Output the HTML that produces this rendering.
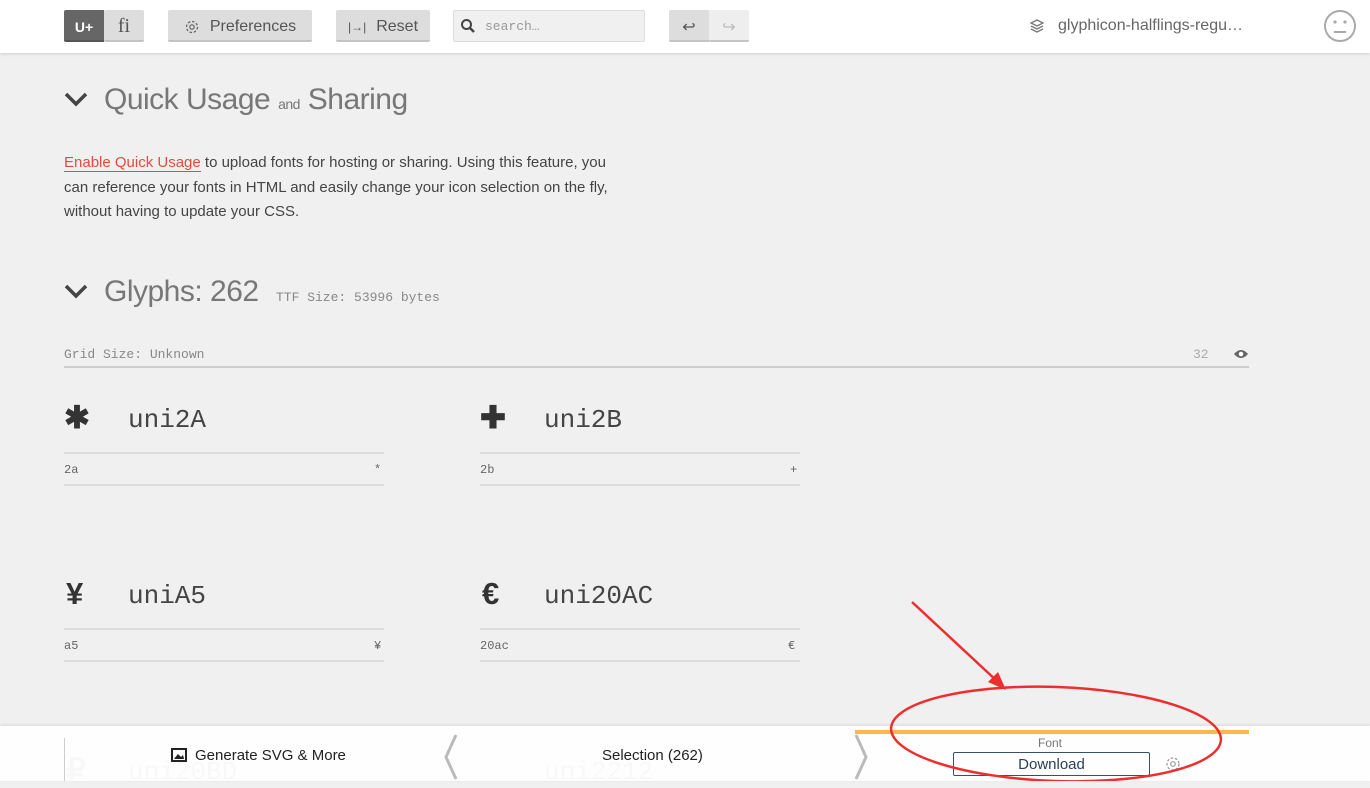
<!DOCTYPE html>
<html><head><meta charset="utf-8"><style>
*{margin:0;padding:0;box-sizing:border-box}
body{width:1370px;height:781px;overflow:hidden;background:#f0f0f0;font-family:"Liberation Sans",sans-serif;position:relative;color:#555}
.a{position:absolute}
.top{left:0;top:0;width:1370px;height:53px;background:#fff;box-shadow:0 1px 3px rgba(0,0,0,.15)}
.btn{position:absolute;top:10px;height:32px;padding-top:3px;background:#ddd;border-bottom:2px solid #c4c4c4;border-radius:2px;font-size:16px;color:#555;display:flex;align-items:center;justify-content:center}
.mono{font-family:"Liberation Mono",monospace}
.hr{position:absolute;height:2px;background:#dcdcdc}
.gname{position:absolute;font-family:"Liberation Mono",monospace;font-size:26px;color:#444}
.small{position:absolute;font-family:"Liberation Mono",monospace;font-size:12px;color:#666}
.icon{position:absolute;font-size:31px;font-weight:bold;color:#333}
</style></head><body>
<div class="a top"></div>
<div class="btn" style="left:64px;width:40px;background:#666;color:#fff;font-weight:bold;font-size:14px;border-bottom-color:#555;border-radius:2px 0 0 2px">U+</div>
<div class="btn" style="left:104px;width:40px;font-family:'Liberation Serif',serif;font-size:20px">fi</div>
<div class="btn" style="left:168px;width:144px"><svg width="16" height="16" viewBox="0 0 16 16" style="margin-right:10px"><circle cx="8" cy="8" r="5.5" fill="none" stroke="#666" stroke-width="1.3" stroke-dasharray="2.5 1.8"/><circle cx="8" cy="8" r="2.2" fill="none" stroke="#666" stroke-width="1.2"/></svg>Preferences</div>
<div class="btn" style="left:336px;width:94px"><span style="font-size:12px;margin-right:10px">|→|</span>Reset</div>
<div class="a" style="left:453px;top:10px;width:192px;height:32px;background:#f0f0f0;border:1px solid #ddd;border-radius:2px"></div>
<svg class="a" style="left:460px;top:18px" width="16" height="16"><circle cx="6.5" cy="6.5" r="4.5" fill="none" stroke="#444" stroke-width="2"/><line x1="10" y1="10" x2="14" y2="14" stroke="#444" stroke-width="2.5"/></svg>
<div class="a mono" style="left:485px;top:19px;font-size:13px;color:#999">search…</div>
<div class="btn" style="left:669px;width:40px;border-radius:2px 0 0 2px;color:#555">↩</div>
<div class="btn" style="left:709px;width:40px;background:#eee;color:#bbb">↪</div>
<svg class="a" style="left:1029px;top:18px" width="16" height="16"><path d="M8 2 L14 5 L8 8 L2 5Z M2 8 L8 11 L14 8 M2 11 L8 14 L14 11" fill="none" stroke="#777" stroke-width="1.3"/></svg>
<div class="a" style="left:1058px;top:17px;font-size:16px;color:#666">glyphicon-halflings-regu…</div>
<svg class="a" style="left:1323px;top:9px" width="34" height="34"><circle cx="17" cy="17" r="15" fill="none" stroke="#aaa" stroke-width="2"/><circle cx="12" cy="13" r="1.6" fill="#aaa"/><circle cx="22" cy="13" r="1.6" fill="#aaa"/><line x1="11" y1="23" x2="23" y2="23" stroke="#aaa" stroke-width="2"/></svg>

<svg class="a" style="left:64px;top:90px" width="24" height="20"><path d="M2 4 L12 14 L22 4" fill="none" stroke="#444" stroke-width="3.5"/></svg>
<div class="a" style="left:104px;top:83px;font-size:30px;color:#777;letter-spacing:-0.5px">Quick Usage <span style="font-size:14px">and</span> Sharing</div>
<div class="a" style="left:64px;top:151px;width:570px;font-size:15px;line-height:24.5px;color:#444"><span style="color:#e8493c;border-bottom:1.5px solid #e8493c">Enable Quick Usage</span> to upload fonts for hosting or sharing. Using this feature, you can reference your fonts in HTML and easily change your icon selection on the fly, without having to update your CSS.</div>

<svg class="a" style="left:64px;top:282px" width="24" height="20"><path d="M2 4 L12 14 L22 4" fill="none" stroke="#444" stroke-width="3.5"/></svg>
<div class="a" style="left:104px;top:275px;font-size:30px;color:#777;letter-spacing:-0.5px">Glyphs: 262</div>
<div class="a mono" style="left:276px;top:290px;font-size:13px;color:#888">TTF Size: 53996 bytes</div>
<div class="a mono" style="left:64px;top:347px;font-size:13px;color:#888">Grid Size: Unknown</div>
<div class="a mono" style="left:1193px;top:347px;font-size:13px;color:#aaa">32</div>
<svg class="a" style="left:1233px;top:348px" width="16" height="12"><path d="M1 6 Q8 -2 15 6 Q8 14 1 6Z" fill="#666"/><circle cx="8" cy="6" r="2.3" fill="#fff"/></svg>
<div class="hr" style="left:64px;top:366px;width:1185px;height:2px;background:#ccc"></div>

<div class="icon" style="left:64px;top:400px">✱</div><div class="gname" style="left:128px;top:405px">uni2A</div>
<div class="hr" style="left:64px;top:452px;width:320px"></div><div class="small" style="left:64px;top:463px">2a</div><div class="small" style="left:374px;top:463px">*</div><div class="hr" style="left:64px;top:484px;width:320px"></div>
<div class="icon" style="left:480px;top:400px">✚</div><div class="gname" style="left:544px;top:405px">uni2B</div>
<div class="hr" style="left:480px;top:452px;width:320px"></div><div class="small" style="left:480px;top:463px">2b</div><div class="small" style="left:790px;top:463px">+</div><div class="hr" style="left:480px;top:484px;width:320px"></div>

<div class="icon" style="left:66px;top:576px">¥</div><div class="gname" style="left:128px;top:581px">uniA5</div>
<div class="hr" style="left:64px;top:628px;width:320px"></div><div class="small" style="left:64px;top:639px">a5</div><div class="small" style="left:374px;top:639px">¥</div><div class="hr" style="left:64px;top:660px;width:320px"></div>
<div class="icon" style="left:482px;top:576px">€</div><div class="gname" style="left:544px;top:581px">uni20AC</div>
<div class="hr" style="left:480px;top:628px;width:320px"></div><div class="small" style="left:480px;top:639px">20ac</div><div class="small" style="left:788px;top:639px">€</div><div class="hr" style="left:480px;top:660px;width:320px"></div>

<div class="icon" style="left:66px;top:752px;color:#999">₽</div><div class="gname" style="left:128px;top:757px;color:#999">uni20BD</div>
<div class="gname" style="left:544px;top:757px;color:#999">uni2212</div>

<div class="a" style="left:0;top:726px;width:1370px;height:55px;background:rgba(255,255,255,.93);box-shadow:0 -1px 3px rgba(0,0,0,.1)"></div>
<div class="a" style="left:64px;top:738px;width:1px;height:43px;background:#ccc"></div>
<svg class="a" style="left:171px;top:748px" width="16" height="14"><rect x="1" y="1" width="14" height="12" fill="none" stroke="#222" stroke-width="2"/><path d="M3 11 L7 6 L10 9 L12 7 L13 11Z" fill="#222"/></svg>
<div class="a" style="left:195px;top:747px;font-size:15px;color:#222">Generate SVG &amp; More</div>
<svg class="a" style="left:440px;top:733px" width="20" height="48"><path d="M16 2 L6 24 L16 46" fill="none" stroke="#bbb" stroke-width="3"/></svg>
<div class="a" style="left:602px;top:747px;font-size:15px;color:#222">Selection (262)</div>
<svg class="a" style="left:852px;top:733px" width="20" height="48"><path d="M4 2 L14 24 L4 46" fill="none" stroke="#bbb" stroke-width="3"/></svg>
<div class="a" style="left:855px;top:730px;width:394px;height:4px;background:#ffb74a"></div>
<div class="a" style="left:1038px;top:736px;font-size:12px;color:#777">Font</div>
<div class="a" style="left:953px;top:752px;width:197px;height:24px;border:1px solid #3a5068;border-radius:2px;text-align:center;font-size:15px;color:#2a4058;line-height:23px">Download</div>
<svg class="a" style="left:1164px;top:755px" width="18" height="18"><circle cx="9" cy="9" r="6" fill="none" stroke="#999" stroke-width="1.3" stroke-dasharray="2.5 1.8"/><circle cx="9" cy="9" r="2.3" fill="none" stroke="#999" stroke-width="1.2"/></svg>

<svg class="a" style="left:0;top:0" width="1370" height="781">
<ellipse cx="1056" cy="734" rx="165" ry="47" fill="none" stroke="#ee2e2e" stroke-width="2.5" transform="rotate(2 1056 734)"/>
<line x1="912" y1="602" x2="998" y2="682" stroke="#ee2e2e" stroke-width="2.5"/>
<path d="M1006 690 L988 682 L998 672Z" fill="#ee2e2e"/>
</svg>
</body></html>
